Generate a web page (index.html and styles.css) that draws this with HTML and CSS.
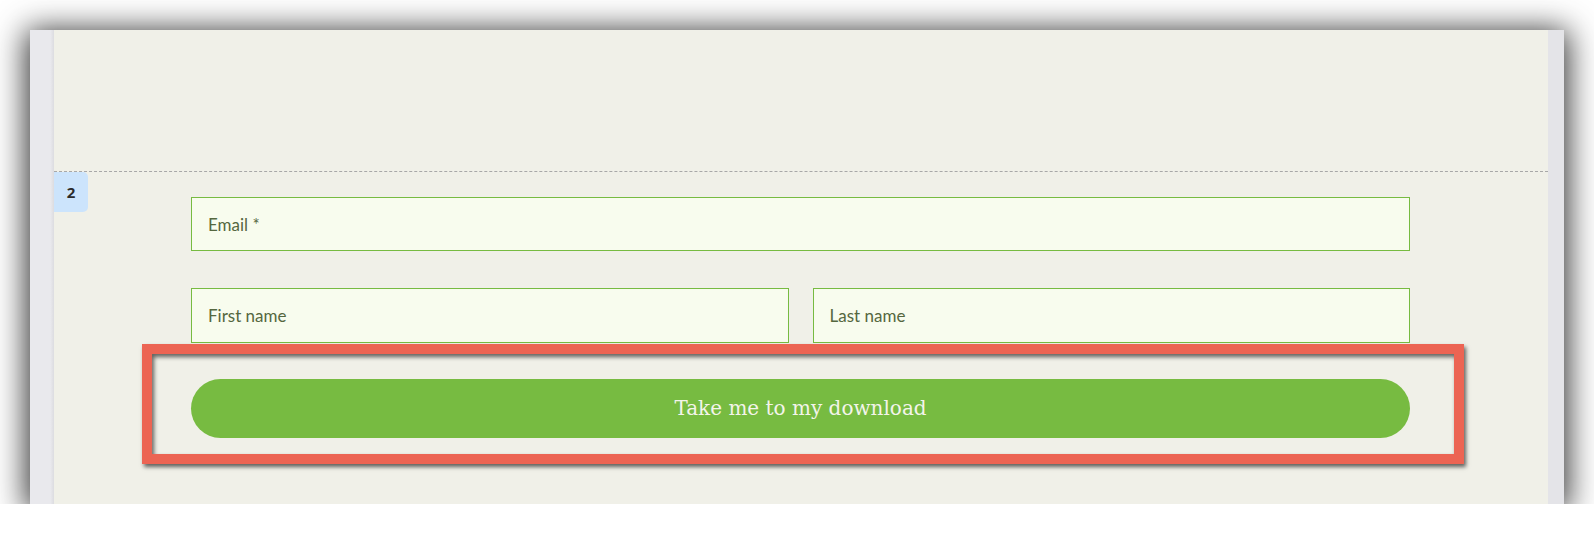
FILE: index.html
```html
<!DOCTYPE html>
<html lang="en">
<head>
    <meta charset="UTF-8">
    <title>Download form</title>
    <link rel="stylesheet" href="styles.css">
</head>
<body>

<div class="frame">
    <div class="side-left"></div>

    <div class="canvas">
        <!-- empty block above the form -->
        <div class="block-top"></div>

        <!-- Block 2: signup form -->
        <div class="block-form">
            <div class="block-num">2</div>

            <div class="field">Email *</div>

            <div class="field-row">
                <div class="field">First name</div>
                <div class="field">Last name</div>
            </div>

            <div class="button-wrap">
                <div class="submit">Take me to my download</div>
                <div class="highlight"></div>
            </div>
        </div>
    </div>

    <div class="side-right"></div>
</div>

</body>
</html>
```

FILE: styles.css
```css
body {
    margin: 0;
    padding: 30px 0 0 30px;
    background-color: #fff;
    font-family: Lato, "Liberation Sans", sans-serif;
}

.frame {
    display: flex;
    width: 1534px;
    height: 474px;
    box-shadow: 0 4px 30px 4px rgba(0, 0, 0, 0.8);
}

.side-left {
    width: 24px;
    background: linear-gradient(to right, #e9e9ed 85%, #dcdce0);
}

.side-right {
    width: 16px;
    background-color: #e4e4e8;
}

.canvas {
    flex: 1;
    background-color: #f0f0e8;
}

.block-top {
    height: 141px;
    border-bottom: 1px dashed #a8a8a8;
}

.block-form {
    position: relative;
    padding: 25px 138px 0 137px;
}

.block-num {
    position: absolute;
    top: 0;
    left: 0;
    width: 34px;
    height: 40px;
    line-height: 40px;
    text-align: center;
    background-color: #cce4fc;
    border-radius: 0 5px 5px 0;
    font-family: "Open Sans", sans-serif;
    font-weight: bold;
    font-size: 15px;
    color: #2b2b2b;
}

.field {
    box-sizing: border-box;
    height: 54px;
    padding: 0 16px;
    display: flex;
    align-items: center;
    background-color: #f8fcee;
    border: 1px solid #77bb41;
    font-size: 17px;
    color: #55673f;
}

.field-row {
    display: flex;
    gap: 24px;
    margin-top: 37px;
}

.field-row .field {
    flex: 1;
    height: 55px;
}

.button-wrap {
    position: relative;
    margin-top: 36px;
}

.submit {
    height: 59px;
    line-height: 58px;
    border-radius: 30px;
    background-color: #77bb41;
    color: #f3f4ea;
    text-align: center;
    font-family: "DejaVu Serif", serif;
    font-size: 20px;
}

.highlight {
    position: absolute;
    top: -35px;
    left: -49px;
    right: -54px;
    bottom: -26px;
    border: 10px solid #ec6453;
    box-shadow: 2px 3px 4px rgba(0, 0, 0, 0.6), inset 2px 3px 4px rgba(0, 0, 0, 0.6);
}
```
